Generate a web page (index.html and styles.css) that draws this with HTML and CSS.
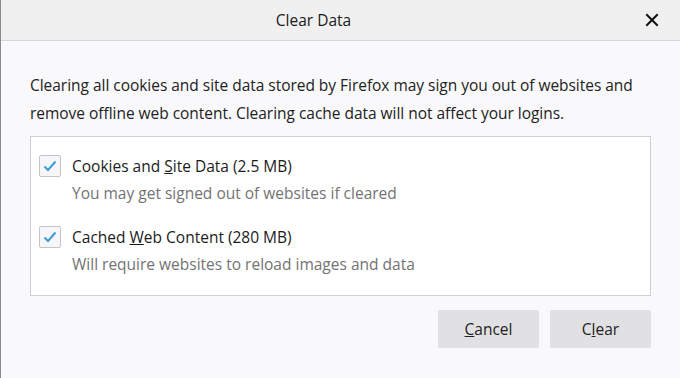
FILE: index.html
```html
<!DOCTYPE html>
<html>
<head>
<meta charset="utf-8">
<link rel="stylesheet" href="styles.css">
</head>
<body>
<div class="dialog">
  <div class="header">
    <div class="title">Clear Data</div>
    <div class="close">
      <svg width="14" height="14" viewBox="0 0 14 14"><path d="M2 2 L12 12 M12 2 L2 12" stroke="#111" stroke-width="2" stroke-linecap="square"/></svg>
    </div>
  </div>
  <div class="content">
    <p class="intro">Clearing all cookies and site data stored by Firefox may sign you out of websites and remove offline web content. Clearing cache data will not affect your logins.</p>
    <div class="box">
      <div class="option">
        <div class="check"><svg width="16" height="14" viewBox="0 0 16 14"><path d="M2.5 7.5 L6 11 L13.5 2.5" fill="none" stroke="#3a9ad6" stroke-width="1.9"/></svg></div>
        <div class="texts">
          <div class="label">Cookies and <u>S</u>ite Data (2.5 MB)</div>
          <div class="desc">You may get signed out of websites if cleared</div>
        </div>
      </div>
      <div class="option">
        <div class="check"><svg width="16" height="14" viewBox="0 0 16 14"><path d="M2.5 7.5 L6 11 L13.5 2.5" fill="none" stroke="#3a9ad6" stroke-width="1.9"/></svg></div>
        <div class="texts">
          <div class="label">Cached <u>W</u>eb Content (280 MB)</div>
          <div class="desc">Will require websites to reload images and data</div>
        </div>
      </div>
    </div>
    <div class="buttons">
      <button class="btn"><u>C</u>ancel</button>
      <button class="btn">C<u>l</u>ear</button>
    </div>
  </div>
</div>
</body>
</html>
```
FILE: styles.css
```css
html, body {
  margin: 0;
  padding: 0;
  width: 680px;
  height: 378px;
  overflow: hidden;
  background: #f9f9fb;
  font-family: "Open Sans", "Noto Sans", sans-serif;
  font-stretch: 90%;
}
.dialog {
  height: 378px;
  border-left: 1px solid #8a8a8a;
  box-sizing: border-box;
  background: #f9f9fb;
}
.header {
  position: relative;
  height: 40px;
  background: #f0f0f0;
  border-bottom: 1px solid #d6d6d6;
  display: flex;
  align-items: center;
  justify-content: center;
}
.title {
  font-size: 15.5px;
  color: #1a1a1a;
  margin-left: -54px;
}
.close {
  position: absolute;
  right: 21px;
  top: 13px;
  width: 14px;
  height: 14px;
}
.close svg { display: block; }
.content {
  padding: 30px 29px 0 29px;
}
.intro {
  margin: 0;
  font-size: 15.5px;
  line-height: 28px;
  color: #222;
  width: 620px;
  letter-spacing: -0.03px;
}
.box {
  margin-top: 9px;
  height: 160px;
  border: 1px solid #cfcfd2;
  background: #fff;
  box-sizing: border-box;
  padding: 17px 0 0 8px;
  display: flex;
  flex-direction: column;
  gap: 17px;
}
.option {
  display: flex;
  gap: 11px;
}
.check {
  width: 22px;
  height: 22px;
  box-sizing: border-box;
  border: 1px solid #c4c4c8;
  border-radius: 2px;
  background: #f6f6f8;
  display: flex;
  align-items: center;
  justify-content: center;
  margin-top: 1px;
}
.texts {
  display: flex;
  flex-direction: column;
}
.label {
  font-size: 15.5px;
  line-height: 24px;
  color: #1c1c1c;
}
.desc {
  font-size: 15.5px;
  line-height: 30px;
  color: #737373;
}
.buttons {
  display: flex;
  justify-content: flex-end;
  gap: 11px;
  margin-top: 14px;
}
.btn {
  width: 101px;
  height: 38px;
  border: none;
  border-radius: 2px;
  background: #e1e1e3;
  font-family: inherit;
  font-stretch: inherit;
  font-size: 15.5px;
  color: #222;
  padding: 0;
}
```
